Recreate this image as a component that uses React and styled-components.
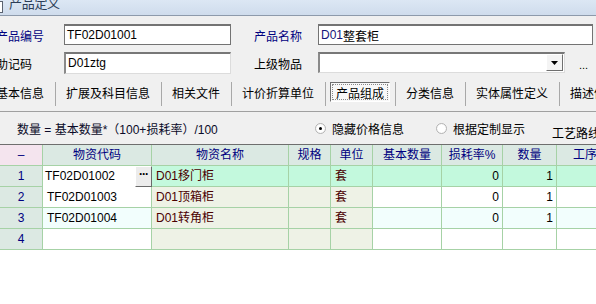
import React from "react";
import styled, { createGlobalStyle, css } from "styled-components";

const GlobalStyle = createGlobalStyle`
  html, body { margin: 0; padding: 0; overflow: hidden; }
  body {
    background: #f0f0f0;
    font-family: "Liberation Sans", "Noto Sans CJK SC", sans-serif;
    font-size: 12px;
    color: #000;
  }
`;

const Page = styled.div`
  width: 596px;
  height: 304px;
  overflow: hidden;
  display: flex;
  flex-direction: column;
  background: #f0f0f0;
`;

const TitleBar = styled.div`
  height: 15px;
  flex: none;
  display: flex;
  align-items: flex-start;
  background: linear-gradient(#dce7f4, #cfdcec);
  border-bottom: 1px solid #8d9aab;
  overflow: hidden;
`;

const TitleIcon = styled.svg`
  width: 4px;
  height: 14px;
  flex: none;
`;

const TitleText = styled.span`
  margin-left: 5px;
  margin-top: -4px;
  font-size: 13px;
  line-height: 16px;
  color: #2c3e58;
  letter-spacing: -0.3px;
`;

const Form = styled.div`
  display: grid;
  grid-template-columns: 68px 167px 23px 64px 275px;
  grid-auto-rows: 21px;
  row-gap: 7px;
  margin: 8px 0 0 -4px;
  align-items: center;
`;

const Label = styled.span`
  color: ${(p) => (p.$required ? "#000080" : "#000")};
  font-size: 12px;
  line-height: 14px;
  padding-top: 5px;
  white-space: nowrap;
`;

const TextBox = styled.div`
  box-sizing: border-box;
  height: ${(p) => (p.$sunken ? 22 : 21)}px;
  background: #fff;
  display: flex;
  align-items: center;
  padding-left: 2px;
  font-size: 12px;
  white-space: nowrap;
  overflow: hidden;
  ${(p) =>
    p.$sunken
      ? css`
          border-style: solid;
          border-width: 2px 1px 1px 2px;
          border-color: #777 #dcdcdc #dcdcdc #8a8a8a;
          padding-left: 2px;
        `
      : css`
          border: 1px solid #737373;
          border-top-width: 2px;
        `}
`;

const Blue = styled.span`
  color: #14147a;
`;

const ComboCell = styled.div`
  display: flex;
  align-items: center;
`;

const Combo = styled.div`
  box-sizing: border-box;
  width: 247px;
  height: 21px;
  background: #fff;
  border-style: solid;
  border-width: 2px 1px 1px 2px;
  border-color: #777 #dcdcdc #dcdcdc #8a8a8a;
  display: flex;
  justify-content: flex-end;
`;

const DropButton = styled.div`
  box-sizing: border-box;
  width: 17px;
  height: 17px;
  margin-right: 1px;
  background: #f4f4f4;
  border-style: solid;
  border-width: 1px;
  border-color: #fff #6f6f6f #6f6f6f #fff;
  display: flex;
  align-items: center;
  justify-content: center;
`;

const Ellipsis = styled.span`
  margin-left: 14px;
  font-size: 11px;
  line-height: 10px;
  margin-top: 4px;
  color: #000;
`;

const TabBar = styled.div`
  display: flex;
  height: 24px;
  margin: 9px 0 0 -14px;
  padding-bottom: 5px;
  border-bottom: 1px solid #a0a0a0;
  flex: none;
`;

const Tab = styled.div`
  display: flex;
  align-items: flex-start;
  padding: 0 5px 0 4px;
`;

const TabLabel = styled.span`
  box-sizing: border-box;
  height: 20px;
  padding: 4px 5px 0;
  line-height: 14px;
  font-size: 12px;
  white-space: nowrap;
  border: 1px solid transparent;
  ${(p) =>
    p.$active &&
    css`
      border-color: #6e6e6e #fff #fff #6e6e6e;
      background: #f8f8f8;
      outline: 1px dotted #888;
      outline-offset: -3px;
    `}
`;

const TabSep = styled.div`
  width: 1px;
  height: 24px;
  background: #a8a8a8;
  flex: none;
`;

const OptionRow = styled.div`
  height: 32px;
  display: flex;
  align-items: center;
  padding-left: 17px;
  flex: none;
  white-space: nowrap;
`;

const Formula = styled.span`
  width: 298px;
  flex: none;
  color: #0a0a28;
  font-size: 12px;
`;

const Option = styled.label`
  display: flex;
  align-items: center;
  gap: 6px;
  margin-right: ${(p) => p.$gap}px;
  font-size: 12px;
`;

const Radio = styled.span`
  box-sizing: border-box;
  width: 11px;
  height: 11px;
  border-radius: 50%;
  border: 1px solid #b4b4b4;
  background: radial-gradient(circle, #fff 55%, #ececec);
  display: flex;
  align-items: center;
  justify-content: center;
  &::after {
    content: "";
    width: 3px;
    height: 3px;
    border-radius: 50%;
    background: ${(p) => (p.$checked ? "#000" : "transparent")};
  }
`;

const RouteLabel = styled.span`
  margin-top: 8px;
  font-size: 12px;
`;

const TableArea = styled.div`
  flex: 1;
  background: #fff;
  border-top: 1px solid #6e6e6e;
  overflow: hidden;
`;

const Grid = styled.div`
  display: grid;
  grid-template-columns: 43px 109px 137px 42px 42px 69px 61px 54px 57px;
  grid-auto-rows: 21px;
  width: 614px;
`;

const Cell = styled.div`
  box-sizing: border-box;
  border-right: 1px solid #a6d2a6;
  border-bottom: 1px solid #a6d2a6;
  background: ${(p) => p.$bg || "#fff"};
  color: ${(p) => p.$color || "#000"};
  text-align: ${(p) => p.$align || "left"};
  padding: 0 ${(p) => (p.$align === "right" ? 3 : 4)}px;
  line-height: 20px;
  font-size: 12px;
  white-space: nowrap;
  overflow: hidden;
`;

const HeadCell = styled(Cell)`
  text-align: center;
  color: #000080;
  background: ${(p) => p.$bg || "#dbe9e3"};
  line-height: 20px;
`;

const EditCell = styled(Cell)`
  display: flex;
  padding: 0 0 0 2px;
  border-bottom: none;
  border-right: none;
`;

const EditText = styled.span`
  flex: 1;
  line-height: 20px;
`;

const DotButton = styled.div`
  box-sizing: border-box;
  width: 17px;
  height: 21px;
  background: #ececec;
  border-style: solid;
  border-width: 1px;
  border-color: #fff #6a6a6a #6a6a6a #fff;
  font-weight: bold;
  font-size: 12px;
  line-height: 14px;
  text-align: center;
  letter-spacing: -1px;
  color: #000;
`;

const headers = ["物资代码", "物资名称", "规格", "单位", "基本数量", "损耗率%", "数量", "工序"];

const rows = [
  { n: 1, code: "TF02D01002", name: "D01移门柜", unit: "套", loss: "0", qty: "1", selected: true },
  { n: 2, code: "TF02D01003", name: "D01顶箱柜", unit: "套", loss: "0", qty: "1" },
  { n: 3, code: "TF02D01004", name: "D01转角柜", unit: "套", loss: "0", qty: "1" },
  { n: 4 },
];

const MINT = "#c3f9dd";
const BEIGE = "#eef2e6";
const CYAN = "#f2fefd";
const ROWNUM = "#dce9e3";
const MAROON = "#4a0000";

function cellBg(row, col) {
  if (row.selected) return MINT;
  const beigeCols = [2, 3, 4];
  if (beigeCols.includes(col)) return BEIGE;
  return row.n % 2 === 1 ? CYAN : "#fff";
}

const tabs = ["基本信息", "扩展及科目信息", "相关文件", "计价折算单位", "产品组成", "分类信息", "实体属性定义", "描述信息"];

export default function App() {
  return (
    <Page>
      <GlobalStyle />
      <TitleBar>
        <TitleIcon viewBox="0 0 4 14">
          <rect x="-6" y="1.5" width="8.5" height="11" fill="#fff" stroke="#5a6370" strokeWidth="1" />
        </TitleIcon>
        <TitleText>产品定义</TitleText>
      </TitleBar>

      <Form>
        <Label $required>产品编号</Label>
        <TextBox>TF02D01001</TextBox>
        <span />
        <Label $required>产品名称</Label>
        <TextBox>
          <Blue>D01</Blue>整套柜
        </TextBox>

        <Label>助记码</Label>
        <TextBox $sunken>D01ztg</TextBox>
        <span />
        <Label>上级物品</Label>
        <ComboCell>
          <Combo>
            <DropButton>
              <svg width="7" height="4" viewBox="0 0 7 4">
                <path d="M0 0h7L3.5 4z" fill="#000" />
              </svg>
            </DropButton>
          </Combo>
          <Ellipsis>...</Ellipsis>
        </ComboCell>
      </Form>

      <TabBar>
        {tabs.map((t, i) => (
          <React.Fragment key={t}>
            <Tab>
              <TabLabel $active={t === "产品组成"}>{t}</TabLabel>
            </Tab>
            {i < tabs.length - 1 && <TabSep />}
          </React.Fragment>
        ))}
      </TabBar>

      <OptionRow>
        <Formula>数量 = 基本数量*（100+损耗率）/100</Formula>
        <Option $gap={32}>
          <Radio $checked />
          隐藏价格信息
        </Option>
        <Option $gap={27}>
          <Radio />
          根据定制显示
        </Option>
        <RouteLabel>工艺路线</RouteLabel>
      </OptionRow>

      <TableArea>
        <Grid>
          <HeadCell $bg="#f4e4ee">–</HeadCell>
          {headers.map((h) => (
            <HeadCell key={h}>{h}</HeadCell>
          ))}
          {rows.map((r) => (
            <React.Fragment key={r.n}>
              <HeadCell $bg={ROWNUM}>{r.n}</HeadCell>
              {r.selected ? (
                <EditCell $bg="#fff">
                  <EditText>{r.code}</EditText>
                  <DotButton>···</DotButton>
                </EditCell>
              ) : (
                <Cell $bg={cellBg(r, 1)}>{r.code}</Cell>
              )}
              <Cell $bg={cellBg(r, 2)} $color={MAROON}>{r.name}</Cell>
              <Cell $bg={cellBg(r, 3)} />
              <Cell $bg={cellBg(r, 4)} $color={MAROON}>{r.unit}</Cell>
              <Cell $bg={cellBg(r, 5)} />
              <Cell $bg={cellBg(r, 6)} $align="right">{r.loss}</Cell>
              <Cell $bg={cellBg(r, 7)} $align="right">{r.qty}</Cell>
              <Cell $bg={cellBg(r, 8)} />
            </React.Fragment>
          ))}
        </Grid>
      </TableArea>
    </Page>
  );
}
